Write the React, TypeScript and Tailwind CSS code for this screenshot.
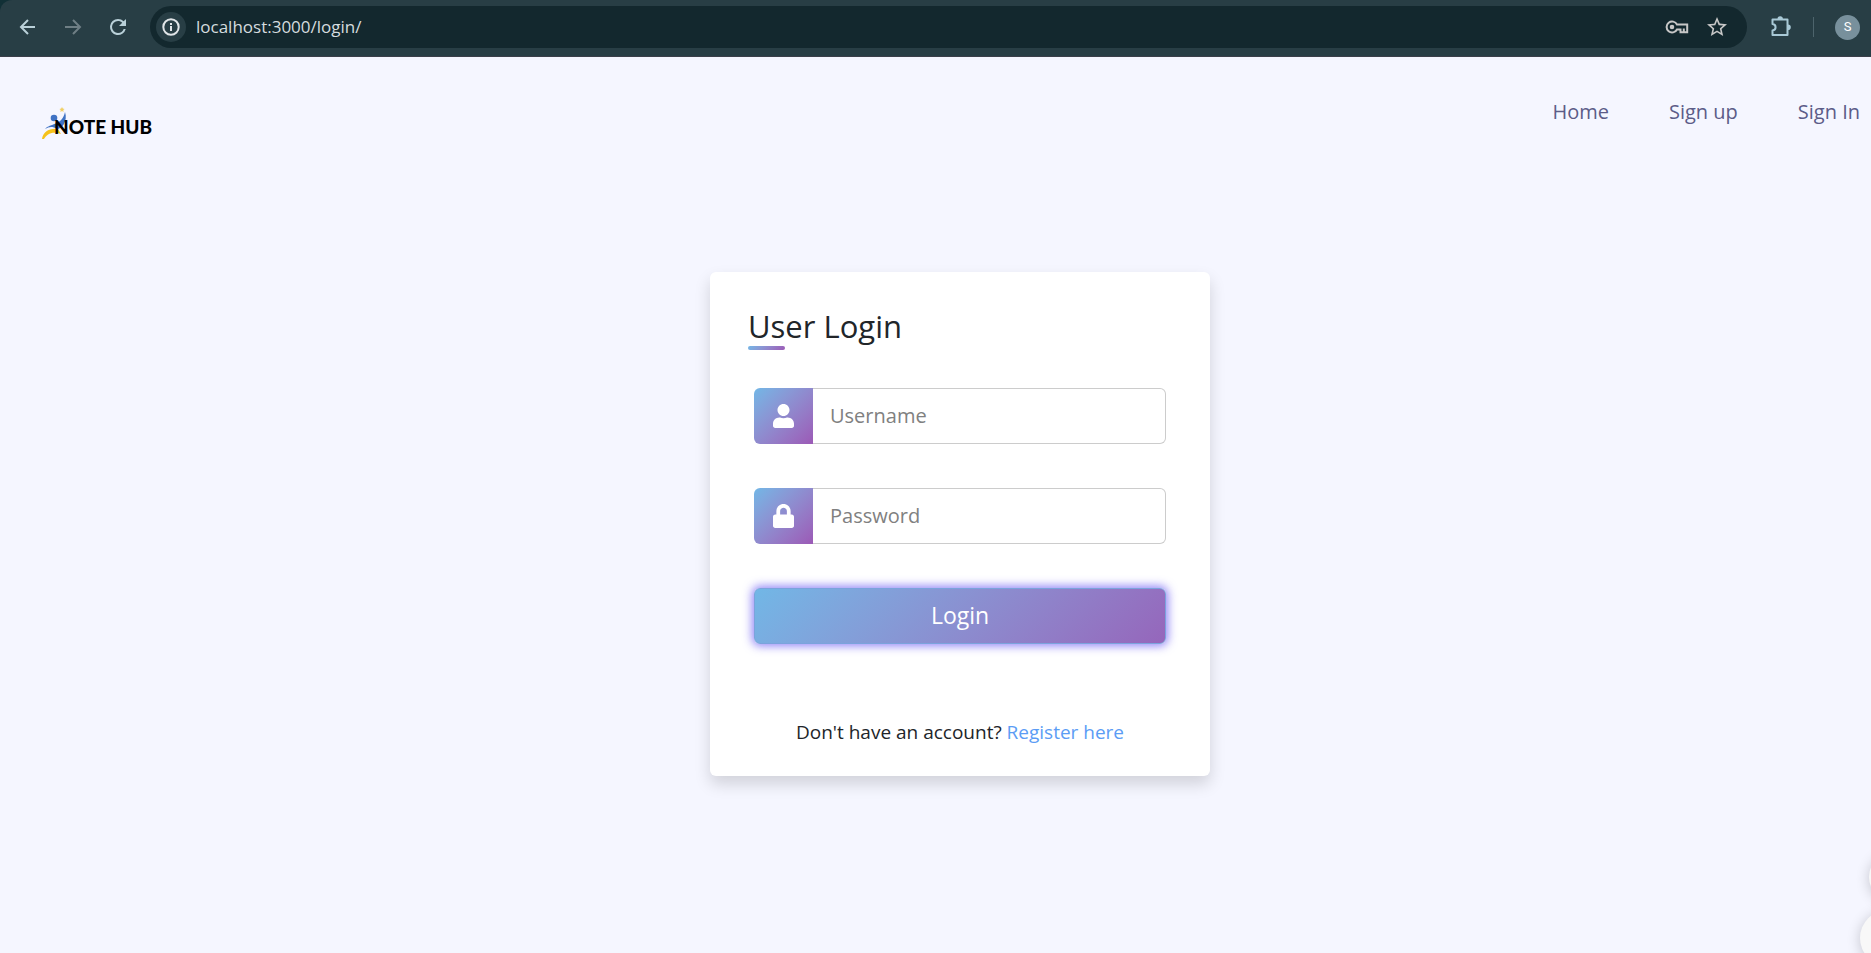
import React from "react";

const navLinks = [
  { label: "Home", href: "/" },
  { label: "Sign up", href: "/register" },
  { label: "Sign In", href: "/login" },
];

function BrowserBar() {
  return (
    <div className="bg-[#113036]">
      <div className="flex h-[57px] items-center rounded-tl-xl border-b border-[#3b3f4a] bg-[#283e45] pr-[11px] pl-4 pb-[2px]">
        <div className="flex items-center gap-[21px] text-[#b9d0d8]">
          <button type="button" aria-label="Back" className="block">
            <svg width="24" height="24" viewBox="0 0 24 24" fill="none" stroke="currentColor" strokeWidth="2">
              <path d="M19 12H5.5M12 5l-7 7 7 7" />
            </svg>
          </button>
          <button type="button" aria-label="Forward" className="block text-[#6f7f85]">
            <svg width="24" height="24" viewBox="0 0 24 24" fill="none" stroke="currentColor" strokeWidth="2">
              <path d="M4 12h14.500M12 5l7 7-7 7" />
            </svg>
          </button>
          <button type="button" aria-label="Reload" className="block">
            <svg width="24" height="24" viewBox="0 0 24 24" fill="currentColor">
              <path d="M17.650 6.350A7.958 7.958 0 0 0 12 4a8 8 0 1 0 7.730 10h-2.080A5.990 5.990 0 0 1 12 18a6 6 0 1 1 0-12c1.660 0 3.140.690 4.220 1.780L13 11h7V4z" />
            </svg>
          </button>
        </div>
        <div className="ml-5 flex h-[42px] min-w-0 flex-1 items-center rounded-full bg-[#13282e] pr-[18px] pl-[6px]">
          <button type="button" aria-label="View site information" className="flex size-[30px] shrink-0 items-center justify-center rounded-full bg-[#283e45] text-[#e1e5e8]">
            <svg width="18" height="18" viewBox="0 0 18 18" fill="none" stroke="currentColor" strokeWidth="2">
              <circle cx="9" cy="9" r="7.700" />
              <path d="M9 8v5M9 5v2" />
            </svg>
          </button>
          <input
            aria-label="Address"
            defaultValue="localhost:3000/login/"
            className="ml-[10px] min-w-0 flex-1 bg-transparent font-['Open_Sans',sans-serif] text-[17px] text-[#d5dcdf] outline-none"
          />
          <button type="button" aria-label="Passwords" className="mr-4 block text-[#c7c7c7]">
            <svg width="24" height="14" viewBox="0 0 24 14" fill="none" stroke="currentColor" strokeWidth="2">
              <path d="M12 4.500A5.500 5.500 0 1 0 12 9.500H15.500V12.200H22.200V4.500Z" />
              <path d="M18.800 8.500v3.500" />
              <circle cx="7" cy="7" r="1.300" fill="currentColor" />
            </svg>
          </button>
          <button type="button" aria-label="Bookmark" className="block text-[#c7c7c7]">
            <svg width="24" height="24" viewBox="0 0 24 24" fill="currentColor">
              <path d="M22 9.240l-7.190-.620L12 2 9.190 8.630 2 9.240l5.460 4.730L5.820 21 12 17.270 18.180 21l-1.630-7.030L22 9.240zM12 15.400l-3.760 2.270 1-4.280-3.320-2.880 4.380-.380L12 6.100l1.710 4.040 4.380.380-3.320 2.880 1 4.280L12 15.400z" />
            </svg>
          </button>
        </div>
        <button type="button" aria-label="Extensions" className="ml-[22px] block text-[#a9c9d6]">
          <svg width="24" height="24" viewBox="0 0 24 24">
            <path d="M3.500 4.500H18.500V20H3.500V15.500C7.600 15 7.600 9.500 3.500 9Z" fill="none" stroke="currentColor" strokeWidth="2" strokeLinejoin="round" />
            <path d="M8.500 4a2.700 2.700 0 0 1 5.400 0zM19 9.500a2.800 2.800 0 0 1 0 5.600z" fill="currentColor" />
          </svg>
        </button>
        <div className="ml-5 h-5 w-px bg-[#4d646c]" />
        <button type="button" aria-label="Profile" className="ml-[21px] flex size-[25px] items-center justify-center rounded-full bg-[#78909c] font-[Roboto,sans-serif] text-[13px] text-white">
          S
        </button>
      </div>
    </div>
  );
}

function Logo() {
  return (
    <a href="/" className="relative flex h-8 items-end pl-3">
      <svg className="absolute top-0 left-0" width="26" height="34" viewBox="0 0 26 34">
        <path d="M0 32C1 25 7 21 16 22L19 27C10 24 5 27 2 32Z" fill="#f5c21b" />
        <path d="M3 22C8 16 20 19 23 5C26 14 20 22 15 22C10 19 7 20 3 22Z" fill="#3f72c4" />
        <circle cx="12" cy="11" r="3.300" fill="#3f72c4" />
        <path d="M20 0l.8 1.600 1.800.3-1.300 1.200.3 1.900L20 4.100 18.400 5l.3-1.900-1.300-1.200 1.800-.3Z" fill="#f0cf65" />
      </svg>
      <span className="relative font-[Lato,sans-serif] text-[19px] leading-6 font-black whitespace-nowrap text-black">NOTE HUB</span>
    </a>
  );
}

function UserIcon() {
  return (
    <svg width="21" height="24" viewBox="0 0 448 512" fill="currentColor">
      <path d="M224 256c70.700 0 128-57.300 128-128S294.700 0 224 0 96 57.300 96 128s57.300 128 128 128zm89.600 32h-16.700c-22.200 10.200-46.900 16-72.900 16s-50.600-5.800-72.900-16h-16.700C60.200 288 0 348.200 0 422.400V464c0 26.500 21.500 48 48 48h352c26.500 0 48-21.500 48-48v-41.600c0-74.200-60.200-134.400-134.400-134.400z" />
    </svg>
  );
}

function LockIcon() {
  return (
    <svg width="21" height="24" viewBox="0 0 448 512" fill="currentColor">
      <path d="M400 224h-24v-72C376 68.200 307.800 0 224 0S72 68.200 72 152v72H48c-26.500 0-48 21.500-48 48v192c0 26.500 21.500 48 48 48h352c26.500 0 48-21.500 48-48V272c0-26.500-21.500-48-48-48zm-104 0H152v-72c0-39.700 32.300-72 72-72s72 32.300 72 72v72z" />
    </svg>
  );
}

function Field({ id, type, label, icon }: { id: string; type: string; label: string; icon: React.ReactNode }) {
  return (
    <div className="flex h-14">
      <label htmlFor={id} aria-label={label} className="flex w-[59px] shrink-0 items-center justify-center rounded-l-md bg-linear-135 from-[#71b7e6] to-[#9b59b6] text-white">
        {icon}
      </label>
      <input
        id={id}
        type={type}
        placeholder={label}
        className="min-w-0 flex-1 rounded-r-md border border-l-0 border-[#ccc] bg-white px-[17px] text-xl text-[#212529] outline-none placeholder:text-[#808080]"
      />
    </div>
  );
}

export default function App() {
  return (
    <div className="relative flex min-h-screen flex-col overflow-hidden bg-[#f5f6ff] font-['Open_Sans',sans-serif]">
      <BrowserBar />
      <header className="flex items-start justify-between pt-10 pr-[11px] pl-[42px]">
        <div className="pt-[10px]">
          <Logo />
        </div>
        <nav className="flex gap-[60px]">
          {navLinks.map((link) => (
            <a key={link.label} href={link.href} className="text-xl leading-[30px] text-[#5c5c88]">
              {link.label}
            </a>
          ))}
        </nav>
      </header>
      <main className="flex justify-center pt-[133px] pl-[49px]">
        <form className="w-full max-w-[500px] rounded-md bg-white px-[38px] pt-[35px] pb-[29px] shadow-[0_8px_16px_rgba(0,0,0,0.15)]" onSubmit={(e) => e.preventDefault()}>
          <h1 className="pb-px text-[31px] leading-[38px] text-[#212529]">User Login</h1>
          <div className="h-1 w-[37px] rounded-full bg-linear-135 from-[#71b7e6] to-[#9b59b6]" />
          <div className="flex flex-col gap-11 pt-[38px] pr-[6px] pl-[6px]">
            <Field id="username" type="text" label="Username" icon={<UserIcon />} />
            <Field id="password" type="password" label="Password" icon={<LockIcon />} />
            <button type="submit" className="h-14 rounded-md border border-[#7ba3dc] bg-linear-135 from-[#71b7e6] to-[#9566bb] pb-[2px] text-[23px] text-white shadow-[0_0_10px_2px_rgba(70,50,240,0.6)]">
              Login
            </button>
          </div>
          <p className="pt-[73px] text-center text-[19px] leading-[30px] text-[#212529]">
            Don&apos;t have an account?{" "}
            <a href="/register" className="text-[#5b9cf5]">Register here</a>
          </p>
        </form>
      </main>
      <button type="button" aria-label="Scroll to top" className="absolute -right-[46px] bottom-[52px] size-12 rounded-full bg-[#f8f8f8] shadow-[0_2px_14px_rgba(0,0,0,0.2)]" />
      <button type="button" aria-label="Open chat" className="absolute -right-[45px] -bottom-[13px] size-14 rounded-full bg-[#f8f8f8] shadow-[0_2px_14px_rgba(0,0,0,0.2)]" />
    </div>
  );
}
